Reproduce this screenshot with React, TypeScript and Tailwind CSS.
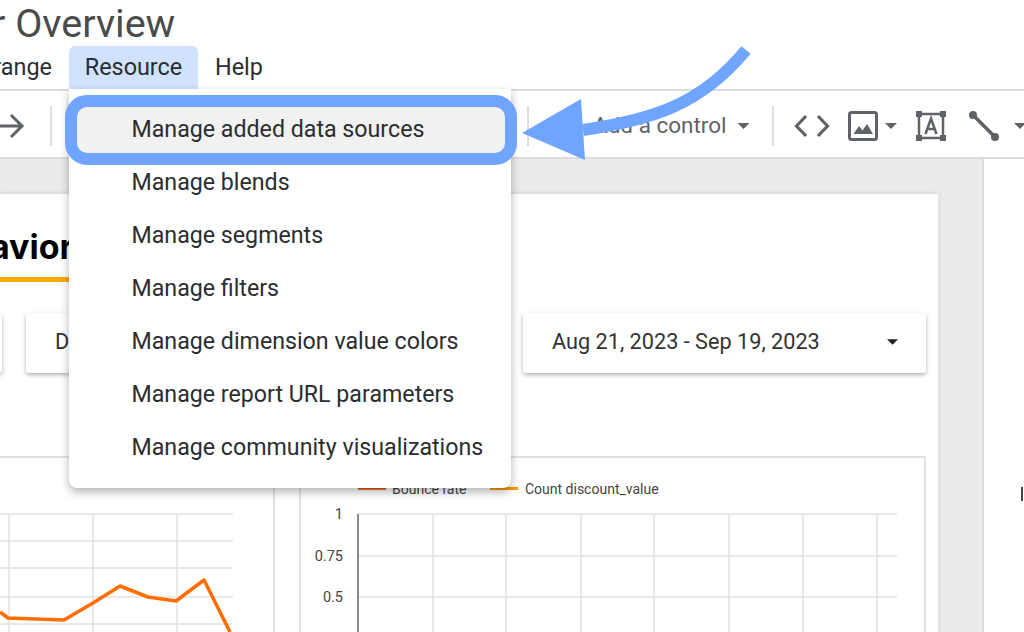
import React from 'react';

const menuItems = [
  'Manage added data sources',
  'Manage blends',
  'Manage segments',
  'Manage filters',
  'Manage dimension value colors',
  'Manage report URL parameters',
  'Manage community visualizations',
];

const Caret = ({ className }: { className: string }) => (
  <svg viewBox="0 0 12 6" className={className} fill="#5f6368">
    <path d="M0 0h12L6 6z" />
  </svg>
);

const Divider = ({ className }: { className: string }) => (
  <div className={`h-[40px] w-[2px] shrink-0 bg-[#dadce0] ${className}`} />
);

const Toolbar = () => (
  <div className="flex h-[70px] items-center overflow-hidden border-y-2 border-[#dadce0] bg-white pt-[3px] text-[#5f6368]">
    <svg viewBox="0 0 25 26" className="h-[26px] w-[25px] shrink-0" fill="none" stroke="#5f6368" strokeWidth="3">
      <path d="M0 13h22M11 2l11 11-11 11" />
    </svg>
    <Divider className="ml-[25px]" />
    <Divider className="ml-[475px]" />
    <svg viewBox="0 0 24 24" className="ml-[21px] h-[24px] w-[24px] shrink-0" fill="#5f6368">
      <path d="M3 3h18v4H3zM3 10h12v4H3z" />
    </svg>
    <span className="ml-[19px] text-[22.500px] leading-none whitespace-nowrap">Add a control</span>
    <Caret className="ml-[10px] h-[6px] w-[13px] shrink-0" />
    <Divider className="ml-[22px]" />
    <svg viewBox="0 0 36 24" className="ml-[20px] h-[24px] w-[36px] shrink-0" fill="none" stroke="#5f6368" strokeWidth="3.200">
      <path d="M12 2 2.500 12l9.500 10M24 2l9.500 10L24 22" />
    </svg>
    <svg viewBox="0 0 30 30" className="ml-[18px] h-[30px] w-[30px] shrink-0" fill="none">
      <rect x="1.500" y="1.500" width="27" height="27" rx="2" stroke="#5f6368" strokeWidth="3" />
      <path d="M5.500 23 11 15l3.500 4.500L19 13l6 10z" fill="#5f6368" />
    </svg>
    <Caret className="ml-[7px] h-[6px] w-[12px] shrink-0" />
    <svg viewBox="0 0 30 30" className="ml-[19px] h-[30px] w-[30px] shrink-0" fill="none">
      <path d="M3 3h24v24H3z" stroke="#5f6368" strokeWidth="2.500" />
      <path d="M0 0h6v6H0zM24 0h6v6h-6zM0 24h6v6H0zM24 24h6v6h-6z" fill="#5f6368" />
      <path d="M9.500 23 15 7.500 20.500 23M11.500 18h7" stroke="#5f6368" strokeWidth="2.500" />
    </svg>
    <svg viewBox="0 0 30 30" className="ml-[23px] h-[30px] w-[30px] shrink-0" fill="#5f6368">
      <path d="M4 4l22 22" stroke="#5f6368" strokeWidth="3.500" />
      <circle cx="4" cy="4" r="4" />
      <circle cx="26" cy="26" r="4" />
    </svg>
    <Caret className="ml-[15px] h-[6px] w-[12px] shrink-0" />
  </div>
);

const LeftChart = () => (
  <svg viewBox="0 2 273 176" className="block h-[176px] w-[273px]" fill="none">
    <g stroke="#e2e2e2" strokeWidth="1.500">
      <path d="M0 58h233M0 85h233M0 112h233M0 141h233M0 168h233" />
      <path d="M9 58v120M93 58v120M177 58v120" />
    </g>
    <path
      d="M0 156l8 6 56 2 29-17 27-17 28 11 28 4 28-21 26 52"
      stroke="#ff6d00"
      strokeWidth="3.500"
      strokeLinejoin="round"
    />
  </svg>
);

const RightChart = () => (
  <svg viewBox="1 1 623 174" className="block h-[174px] w-[623px]" fill="none">
    <path d="M58 31.500h28" stroke="#e8590c" strokeWidth="2.500" />
    <path d="M190 31.500h28" stroke="#ff9800" strokeWidth="3" />
    <g fontFamily="Roboto, sans-serif" fontSize="14" fill="#444">
      <text x="92" y="36.500">Bounce rate</text>
      <text x="225" y="36.500">Count discount_value</text>
    </g>
    <g stroke="#e2e2e2" strokeWidth="1.500">
      <path d="M58 57h539M58 99h539M58 140h539" />
      <path d="M133 57v118M206 57v118M281 57v118M354 57v118M429 57v118M503 57v118M577 57v118" />
    </g>
    <path d="M58 57v118" stroke="#666" strokeWidth="1.500" />
    <g fontFamily="Roboto, sans-serif" fontSize="14.500" fill="#444" textAnchor="end">
      <text x="43" y="62">1</text>
      <text x="43" y="104">0.75</text>
      <text x="43" y="145">0.5</text>
    </g>
  </svg>
);

const Report = () => (
  <div className="mt-[35px] mr-[44px] h-[500px] bg-white shadow-[0_0_6px_rgba(0,0,0,0.12)]">
    <div className="-ml-[74px] w-[400px] border-b-[5px] border-[#ffab00] pt-[30px] pb-[8px] font-['Inter',sans-serif] text-[34px] leading-[45px] font-bold text-black">
      Behavior
    </div>
    <div className="mt-[31px] flex gap-[24px] font-['Roboto',sans-serif] text-[21.700px] text-[#333]">
      <div className="-ml-[20px] h-[60px] w-[22px] rounded-[3px] bg-white shadow-[0_2px_4px_rgba(0,0,0,0.3)]" />
      <div className="flex h-[60px] w-[473px] items-center rounded-[3px] bg-white pb-[2px] pl-[29px] shadow-[0_2px_4px_rgba(0,0,0,0.3)]">
        Device
      </div>
      <div className="flex h-[60px] w-[403px] items-center justify-between rounded-[3px] bg-white pr-[28px] pb-[2px] pl-[29px] shadow-[0_2px_4px_rgba(0,0,0,0.3)]">
        <span className="whitespace-nowrap">Aug 21, 2023 - Sep 19, 2023</span>
        <svg viewBox="0 0 12 6" className="h-[6px] w-[11px]" fill="#222">
          <path d="M0 0h12L6 6z" />
        </svg>
      </div>
    </div>
    <div className="mt-[83px] flex gap-[24px]">
      <div className="border-t-2 border-r-2 border-[#e2e2e2]">
        <LeftChart />
      </div>
      <div className="border-x-2 border-t-2 border-[#e2e2e2]">
        <RightChart />
      </div>
    </div>
  </div>
);

const ResourceMenu = () => (
  <div className="absolute top-[89px] left-[69px] w-[442px] rounded-b-[8px] bg-white pt-[14.500px] pb-[13.500px] text-[23.200px] text-[#2b2d30] shadow-[0_4px_10px_rgba(0,0,0,0.3)]">
    {menuItems.map((item, i) => (
      <div key={item} className="relative flex h-[53px] items-center pb-[2px] pl-[62.500px] whitespace-nowrap">
        {i === 0 && (
          <div className="absolute -top-[8.500px] -right-[6px] -left-[4px] h-[70px] rounded-[22px] border-[12px] border-[#70a5ff] bg-[#f1f1f1]" />
        )}
        <span className="relative">{item}</span>
      </div>
    ))}
  </div>
);

export default function App() {
  return (
    <div className="relative flex h-[632px] w-[1024px] flex-col overflow-hidden bg-white font-['Roboto',sans-serif]">
      <header className="h-[89px] shrink-0 bg-white">
        <div className="-ml-[8px] h-[46px] text-[39.500px] leading-[48px] whitespace-nowrap text-[#4a4b4c]">r Overview</div>
        <div className="flex h-[43px] items-center pt-[1px] text-[23.400px] text-[#2b2d30]">
          <div className="flex w-[69px] shrink-0 justify-end pr-[17px]">
            <span className="whitespace-nowrap">Arrange</span>
          </div>
          <div className="-mt-[1px] flex h-[43px] w-[129px] shrink-0 items-center justify-center rounded-t-[6px] bg-[#d0e2fd] pt-[1px]">
            Resource
          </div>
          <div className="ml-[17px]">Help</div>
        </div>
      </header>
      <Toolbar />
      <main className="flex min-h-0 flex-1">
        <div className="min-w-0 flex-1 bg-[#ebebeb]">
          <Report />
        </div>
        <aside className="w-[42px] shrink-0 border-l-2 border-[#dadce0] bg-white pt-[328px] pl-[37px]">
          <div className="h-[14px] w-[2px] bg-[#444]" />
        </aside>
      </main>
      <ResourceMenu />
      <svg viewBox="0 0 1024 632" className="pointer-events-none absolute inset-0 h-[632px] w-[1024px]" fill="none">
        <path d="M746 50C700 106 650 120 583 130" stroke="#70a5ff" strokeWidth="12" />
        <path d="M522 133 581 99 585 160z" fill="#70a5ff" />
      </svg>
    </div>
  );
}
